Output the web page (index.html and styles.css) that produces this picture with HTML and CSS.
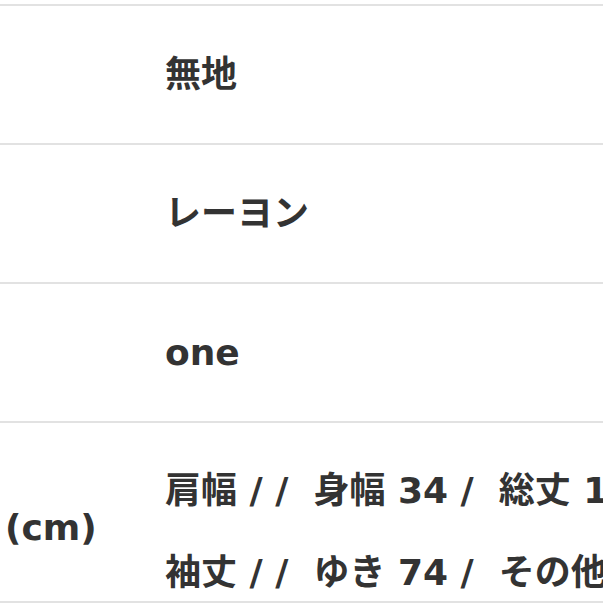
FILE: index.html
```html
<!DOCTYPE html>
<html lang="ja">
<head>
<meta charset="utf-8">
<title>商品詳細</title>
<link rel="stylesheet" href="styles.css">
</head>
<body>
<div class="spec">
  <div class="row">
    <div class="label"></div>
    <div class="value">無地</div>
  </div>
  <div class="row">
    <div class="label"></div>
    <div class="value">レーヨン</div>
  </div>
  <div class="row">
    <div class="label"></div>
    <div class="value">one</div>
  </div>
  <div class="row row-size">
    <div class="label label-unit">(cm)</div>
    <div class="value value-lines">
      <div class="line">肩幅 / /  身幅 34 /  総丈 1</div>
      <div class="line">袖丈 / /  ゆき 74 /  その他</div>
    </div>
  </div>
</div>
</body>
</html>
```

FILE: styles.css
```css
html, body {
  margin: 0;
  padding: 0;
  background: #ffffff;
}

body {
  font-family: "DejaVu Sans", "Noto Sans CJK JP", sans-serif;
  font-weight: 700;
  font-size: 36px;
  color: #333333;
  overflow: hidden;
}

.spec {
  padding-top: 4px;
  width: 603px;
  overflow: hidden;
}

.row {
  display: flex;
  align-items: center;
  height: 137px;
  border-top: 2px solid #e2e2e2;
}

.row-size {
  height: 118px;
  padding: 50px 0 10px;
  border-bottom: 2px solid #e2e2e2;
}

.label {
  flex: none;
  width: 165px;
  box-sizing: border-box;
  padding-left: 5px;
  line-height: 1;
}

.label-unit {
  padding-bottom: 8px;
}

.value {
  flex: 1;
  min-width: 0;
  white-space: nowrap;
  line-height: 1;
}

.value-lines {
  display: flex;
  flex-direction: column;
  gap: 46px;
}

.line {
  white-space: pre;
}
```
